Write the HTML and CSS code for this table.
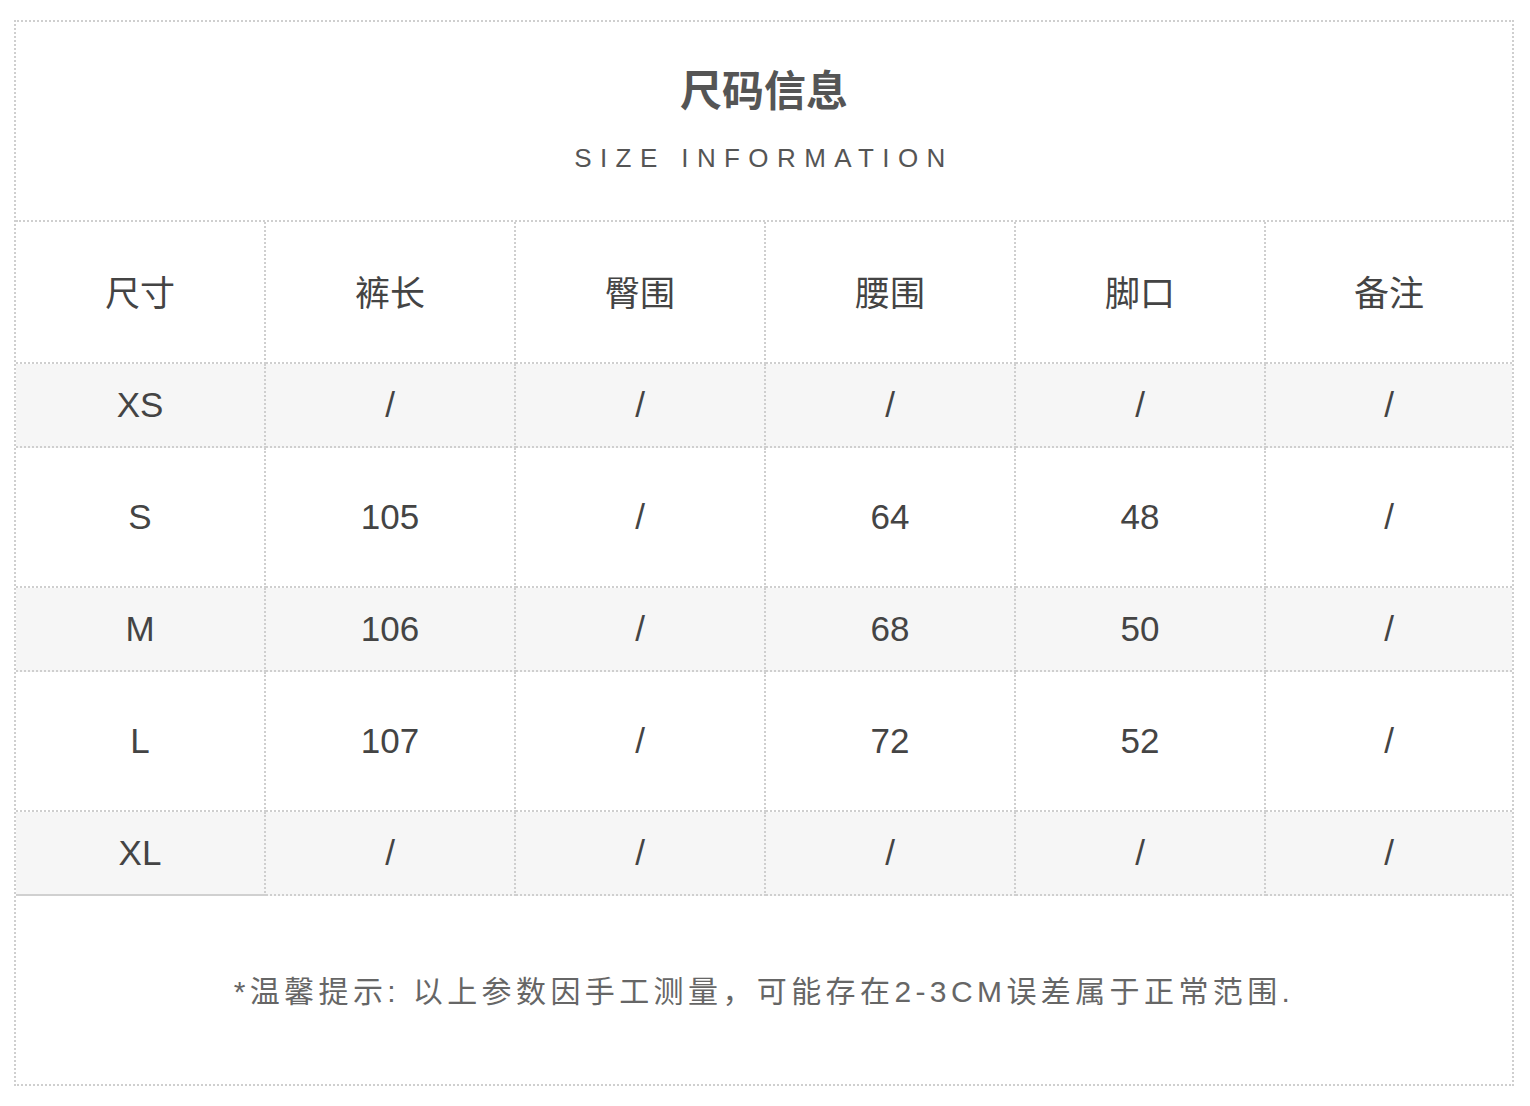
FILE: index.html
```html
<!DOCTYPE html>
<html lang="zh-CN">
<head>
<meta charset="utf-8">
<title>尺码信息</title>
<link rel="stylesheet" href="styles.css">
</head>
<body>
<div class="card">
  <div class="head">
    <div class="title">尺码信息</div>
    <div class="subtitle">SIZE INFORMATION</div>
  </div>
  <div class="table">
    <div class="row tall hdr">
      <div class="cell">尺寸</div><div class="cell">裤长</div><div class="cell">臀围</div><div class="cell">腰围</div><div class="cell">脚口</div><div class="cell">备注</div>
    </div>
    <div class="row short alt">
      <div class="cell">XS</div><div class="cell">/</div><div class="cell">/</div><div class="cell">/</div><div class="cell">/</div><div class="cell">/</div>
    </div>
    <div class="row tall">
      <div class="cell">S</div><div class="cell">105</div><div class="cell">/</div><div class="cell">64</div><div class="cell">48</div><div class="cell">/</div>
    </div>
    <div class="row short alt">
      <div class="cell">M</div><div class="cell">106</div><div class="cell">/</div><div class="cell">68</div><div class="cell">50</div><div class="cell">/</div>
    </div>
    <div class="row tall">
      <div class="cell">L</div><div class="cell">107</div><div class="cell">/</div><div class="cell">72</div><div class="cell">52</div><div class="cell">/</div>
    </div>
    <div class="row short alt last">
      <div class="cell">XL</div><div class="cell">/</div><div class="cell">/</div><div class="cell">/</div><div class="cell">/</div><div class="cell">/</div>
    </div>
  </div>
  <div class="foot">*温馨提示: 以上参数因手工测量，可能存在2-3CM误差属于正常范围.</div>
</div>
</body>
</html>
```

FILE: styles.css
```css
* { box-sizing: border-box; }
html, body { margin: 0; padding: 0; background: #fff; }
body {
  font-family: "Liberation Sans", "Noto Sans CJK SC", sans-serif;
  color: #444;
  padding: 20px 0 0 14px;
}
.card {
  width: 1500px;
  height: 1066px;
  border: 2px dotted #cfcfcf;
  display: flex;
  flex-direction: column;
}
.head {
  height: 200px;
  border-bottom: 2px dotted #cfcfcf;
  padding-top: 41px;
  text-align: center;
  color: #555;
}
.title {
  font-family: "Noto Sans CJK SC", sans-serif;
  font-weight: 700;
  font-size: 42px;
  line-height: 50px;
}
.subtitle {
  margin-top: 30px;
  font-size: 26px;
  line-height: 30px;
  letter-spacing: 8.4px;
}
.row {
  display: grid;
  grid-template-columns: repeat(5, 250px) 1fr;
}
.row.tall { height: 140px; }
.row.short { height: 84px; }
.row.hdr { height: 142px; }
.row.hdr .cell { padding-bottom: 4px; }
.row.alt { background: #f6f6f6; }
.cell {
  display: flex;
  align-items: center;
  justify-content: center;
  border-right: 2px dotted #cfcfcf;
  border-bottom: 2px dotted #cfcfcf;
  font-size: 35px;
  color: #444;
}
.cell:last-child { border-right: none; }
.row.last .cell:first-child { border-bottom: 2px solid #d0d0d0; }
.foot {
  flex: 1;
  display: flex;
  align-items: center;
  justify-content: center;
  font-family: "Liberation Sans", "Noto Sans CJK SC", sans-serif;
  font-size: 30px;
  letter-spacing: 4.4px;
  color: #666;
  padding-bottom: 2px;
}
```
